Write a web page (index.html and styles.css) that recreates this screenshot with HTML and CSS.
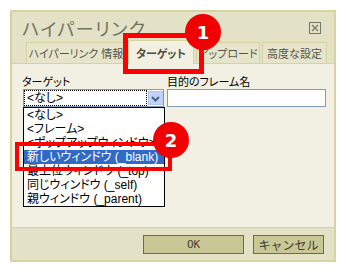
FILE: index.html
```html
<!DOCTYPE html>
<html lang="ja">
<head>
    <meta charset="UTF-8">
    <title>ハイパーリンク</title>
    <link rel="stylesheet" href="styles.css">
</head>
<body>
    <div class="dialog">
        <div class="dialog-header">
            <span class="dialog-title">ハイパーリンク</span>
            <span class="close-button">
                <svg width="12" height="12" viewBox="0 0 12 12">
                    <rect x="0.5" y="0.5" width="11" height="11" fill="none" stroke="#77776a"/>
                    <path d="M3 3 L9 9 M9 3 L3 9" stroke="#77776a" stroke-width="1.2"/>
                </svg>
            </span>
        </div>
        <div class="tabs">
            <div class="tab tab-info">ハイパーリンク 情報</div>
            <div class="tab tab-target active">ターゲット</div>
            <div class="tab tab-upload">アップロード</div>
            <div class="tab tab-advanced">高度な設定</div>
        </div>
        <div class="panel">
            <div class="field-row">
                <div class="field field-target">
                    <label class="field-label">ターゲット</label>
                    <div class="select">
                        <span class="select-value">&lt;なし&gt;</span>
                        <span class="select-arrow">
                            <svg width="15" height="15" viewBox="0 0 15 15">
                                <path d="M4 6 L7.5 9.5 L11 6" fill="none" stroke="#4d6185" stroke-width="2"/>
                            </svg>
                        </span>
                        <ul class="select-list">
                            <li>&lt;なし&gt;</li>
                            <li>&lt;フレーム&gt;</li>
                            <li>&lt;ポップアップウィンドウ&gt;</li>
                            <li class="selected">新しいウィンドウ (_blank)</li>
                            <li>最上位ウィンドウ (_top)</li>
                            <li>同じウィンドウ (_self)</li>
                            <li>親ウィンドウ (_parent)</li>
                        </ul>
                    </div>
                </div>
                <div class="field field-frame">
                    <label class="field-label">目的のフレーム名</label>
                    <div class="text-input"></div>
                </div>
            </div>
        </div>
        <div class="dialog-footer">
            <button class="button button-ok">OK</button>
            <button class="button button-cancel">キャンセル</button>
        </div>
    </div>

    <div class="marker marker-tab"></div>
    <div class="badge badge-one">1</div>
    <div class="marker marker-item"></div>
    <div class="badge badge-two">2</div>
</body>
</html>
```

FILE: styles.css
```css
body {
    margin: 0;
    background-color: #fff;
    font-family: "Liberation Sans", "Noto Sans CJK JP", sans-serif;
    font-feature-settings: "palt";
}

.dialog {
    margin: 10px 0 0 10px;
    width: 322px;
    height: 248px;
    border: 2px solid #d6d3a1;
    background-color: #e3e2c6;
    display: flex;
    flex-direction: column;
}

.dialog-header {
    height: 28px;
    display: flex;
    justify-content: space-between;
    align-items: flex-start;
    padding: 0 13px 0 10px;
}

.dialog-title {
    font-family: "Noto Sans CJK JP", sans-serif;
    font-size: 18px;
    line-height: 20px;
    padding-top: 6px;
    color: #727262;
    letter-spacing: 1.5px;
}

.close-button {
    padding-top: 10px;
    line-height: 0;
}

.tabs {
    height: 23px;
    display: flex;
    align-items: flex-end;
    gap: 2px;
    padding-left: 14px;
}

.tab {
    height: 20px;
    border: 1px solid #d6d3a1;
    border-bottom: none;
    background-color: #e6e5cb;
    color: #55554a;
    font-size: 11px;
    display: flex;
    align-items: center;
    justify-content: center;
    box-sizing: content-box;
}

.tab-info { width: 98px; }
.tab-target { width: 64px; }
.tab-upload { width: 62px; }
.tab-advanced { width: 63px; }

.tab.active {
    height: 23px;
    margin-bottom: -1px;
    background-color: #f1f0e3;
    font-weight: bold;
    color: #4f4f40;
    position: relative;
}

.panel {
    height: 152px;
    border-top: 1px solid #d6d3a1;
    border-bottom: 1px solid #d6d3a1;
    background-color: #f1f0e3;
    padding: 11px 0 0 10px;
}

.field-row {
    display: flex;
}

.field {
    display: flex;
    flex-direction: column;
}

.field-target {
    width: 145px;
}

.field-label {
    font-size: 11px;
    line-height: 14px;
    color: #000;
}

.select {
    position: relative;
    margin-left: 1px;
    width: 139px;
    height: 16px;
    border: 1px solid #7f9db9;
    background-color: #fff;
    display: flex;
}

.select-value {
    flex: 1;
    border: 1px dotted #000;
    font-size: 12px;
    line-height: 14px;
    padding-left: 2px;
}

.select-arrow {
    width: 15px;
    height: 14px;
    margin: 1px 0 0 1px;
    background-color: #c1d3fb;
    border: 1px solid #b3c6ef;
    box-sizing: border-box;
    line-height: 0;
    overflow: hidden;
}

.select-arrow svg {
    margin: -1px 0 0 -1px;
}

.select-list {
    position: absolute;
    top: 17px;
    left: -1px;
    width: 140px;
    margin: 0;
    padding: 0;
    list-style: none;
    border: 1px solid #000;
    background-color: #fff;
    z-index: 2;
}

.select-list li {
    height: 14px;
    line-height: 14px;
    font-size: 12px;
    padding-left: 3px;
    white-space: nowrap;
    color: #000;
}

.select-list li.selected {
    background-color: #316ac5;
    color: #fff;
}

.text-input {
    width: 157px;
    height: 16px;
    border: 1px solid #7f9db9;
    background-color: #fff;
}

.dialog-footer {
    flex: 1;
    display: flex;
    justify-content: flex-end;
    align-items: flex-start;
    gap: 9px;
    padding: 7px 10px 0 0;
}

.button {
    height: 19px;
    border: 1px solid #6b6b52;
    background-color: #c8c796;
    color: #3f3f33;
    font-family: "DejaVu Sans Mono", "Noto Sans CJK JP", monospace;
    font-size: 11px;
    padding: 0;
}

.button-ok { width: 101px; }
.button-cancel {
    width: 71px;
    font-family: "Noto Sans CJK JP", sans-serif;
    font-size: 12px;
}

.marker {
    position: absolute;
    z-index: 3;
    box-sizing: border-box;
    border: 5px solid #ff0000;
}

.marker-tab {
    left: 123px;
    top: 33px;
    width: 81px;
    height: 41px;
}

.marker-item {
    left: 15px;
    top: 142px;
    width: 157px;
    height: 29px;
    border-width: 4px;
}

.badge {
    position: absolute;
    z-index: 4;
    width: 36px;
    height: 36px;
    border-radius: 50%;
    background-color: #f00000;
    color: #fff;
    font-family: "DejaVu Sans", sans-serif;
    font-weight: bold;
    font-size: 18px;
    display: flex;
    align-items: center;
    justify-content: center;
}

.badge-one {
    left: 185px;
    top: 14px;
}

.badge-two {
    left: 153px;
    top: 122px;
}
```
